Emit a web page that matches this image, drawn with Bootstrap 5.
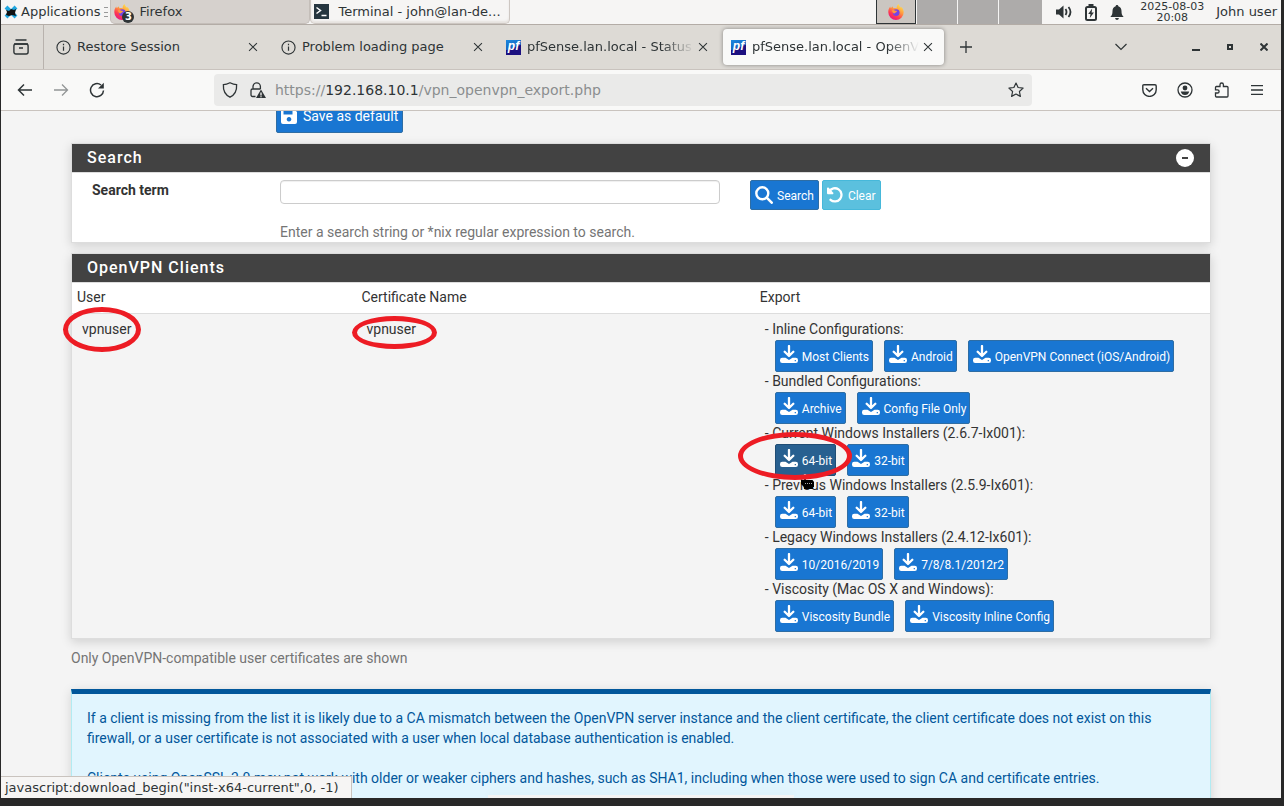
<!DOCTYPE html>
<html lang="en">
<head>
<meta charset="utf-8">
<meta name="viewport" content="width=device-width, initial-scale=1">
<title>pfSense.lan.local - OpenVPN: Client Export Utility</title>
<link href="https://cdn.jsdelivr.net/npm/bootstrap@5.3.0/dist/css/bootstrap.min.css" rel="stylesheet">
<style>
  :root { --ink: #2e3436; --chrome: #f6f5f4; --line: #c9c3be; }
  body { background: #282828; color: var(--ink); font: 13px/20px "DejaVu Sans", sans-serif; padding: 0 3px 8px 1px; }
  svg { display: block; flex: none; }
  .plain { border: 0; background: none; padding: 0; color: inherit; display: flex; align-items: center; justify-content: center; }

  /* desktop panel */
  .panel-bar { height: 25px; background: var(--chrome); border-bottom: 1px solid #b3aca6; }
  .panel-bar .plain { line-height: 20px; }
  .apps { margin: 0 4px 0 3px; gap: 3px; }
  .grip { width: 4px; height: 10px; margin-right: 2px; border-top: 1px solid #999; border-bottom: 1px solid #999; background: linear-gradient(#999, #999) 0 50% / 100% 1px no-repeat; }
  .task { width: 200px; height: 24px; justify-content: flex-start; padding-left: 3px; gap: 5px; border-radius: 0 0 5px 5px; }
  .task-on { background: #d6d1cd; border: 1px solid #c4beb9; border-top: 0; }
  .task-off { border: 1px solid #cdc7c2; border-top: 0; box-shadow: inset 0 -2px 2px #e6e2df; }
  .task-count { right: -4px; bottom: -3px; width: 12px; height: 12px; border-radius: 50%; background: var(--ink); color: #fff; font: bold 10px/12px "DejaVu Sans", sans-serif; }
  .pager { height: 24px; gap: 1px; }
  .pager > button { width: 40px; height: 24px; background: #adabaa; }
  .pager > button:first-child { background: #cbc6c1; border: 1px solid var(--ink); border-top: 0; }
  .pager > button:last-child { width: 43px; }
  .tray { margin: 0 16px 0 14px; gap: 12px; }
  .clock { font-size: 11px; line-height: 11px; }

  /* browser tabs */
  .tab-bar { height: 45px; background: #dddad5; border-bottom: 1px solid var(--line); }
  .plain.tab-list-btn { width: 43px; border-right: 1px solid #b8b2ad; padding-right: 2px; }
  .tab-item { width: 221px; height: 36px; padding: 0 8px; border-radius: 4px; }
  .tab-item.active { background: #f9f9f8; box-shadow: 0 0 4px #0006; }
  .tab-name { width: 168px; margin-left: 6px; overflow: hidden; white-space: nowrap; text-align: left; justify-content: flex-start; }
  .tab-fade { -webkit-mask-image: linear-gradient(to right, #000 135px, transparent 167px); mask-image: linear-gradient(to right, #000 135px, transparent 167px); }
  .favicon { width: 15px; height: 15px; background: linear-gradient(160deg, #1a8ae0, #1565c0 48%, #1c1080 52%); color: #fff; font: italic bold 12px/13px "Liberation Sans", sans-serif; text-align: center; }
  .tab-x { width: 16px; height: 16px; }
  .win-btn { width: 34px; }

  /* toolbar */
  .tool-bar { height: 41px; background: #f9f9f8; border-bottom: 1px solid var(--line); padding: 0 6px; }
  .tool-btn { width: 36px; height: 32px; }
  .url-box { margin: 0 99px; height: 32px; background: #eaeae9; border-radius: 4px; padding: 0 8px; }
  .url-text { font-size: 14px; color: #8b8e8f; margin-left: 9px; }
  .url-text b { font-weight: 400; color: var(--ink); }

  /* web page */
  .page { background: #f4f4f4; color: #333; font: 14px/20px Roboto, sans-serif; }
  .page .btn { --bs-btn-font-size: 12px; --bs-btn-border-radius: 2px; --bs-btn-color: #fff; --bs-btn-bg: #1976d2; --bs-btn-border-color: #2e6da4;
    --bs-btn-hover-bg: #286090; --bs-btn-hover-border-color: #204d74; --bs-btn-hover-color: #fff; --bs-btn-active-color: #fff; --bs-btn-active-bg: #286090; --bs-btn-active-border-color: #204d74;
    display: inline-flex; align-items: center; gap: 4px; height: 30px; line-height: 20px; padding: 2px 4px 0; }
  .page .btn svg { margin-top: -2px; }
  .page .btn-clear { --bs-btn-bg: #5bc0de; --bs-btn-border-color: #46b8da; gap: 5px; margin-left: 3px; }
  .page .btn-save { --bs-btn-font-size: 14px; height: 32px; gap: 6px; margin: -10px 0 10px 205px; padding: 0 4px 2px; }
  .page .btn-save svg { margin-top: 0; }
  .box { border: 1px solid #ddd; box-shadow: 0 3px 10px #00000026; margin-bottom: 10px; background: #fff; }
  .box-head { background: #424242; color: #fff; border-bottom: 1px solid #ddd; padding: 0 16px 0 15px; height: 29px; font-size: 16px; line-height: 28px; font-weight: 500; letter-spacing: 1px; margin: 0; }
  .box-form { padding: 7px 20px 0; }
  .box-form .row { --bs-gutter-x: 30px; }
  .box-form input { height: 24px; padding: 2px 6px; border: 1px solid #ccc; border-radius: 4px; font-size: 14px; box-shadow: inset 0 1px 1px #0001; }
  .box-form .help-line { margin-top: 18px; color: #757575; }
  .clients { --bs-table-bg: transparent; --bs-table-color: #333; color: #333; table-layout: fixed; }
  .clients th { font-weight: 400; padding: 4px 5px 6px; border-bottom: 1px solid #ddd; }
  .clients td { padding: 6px 10px; border: 0; background: #f4f4f4; line-height: 18px; }
  .export-name { padding-bottom: 2px; }
  .export-row { gap: 11px; padding-left: 10px; }
  .page .export-row .btn { height: 32px; padding-right: 3px; }
  .page .export-row .btn svg { margin-top: -6px; }
  .note { color: #757575; margin-top: -1px; }
  .info-box { margin-top: 21px; min-height: 160px; border: 1px solid #b2ebf2; border-top: 5px solid #01579b; background: #e1f5fe; color: #01579b; padding: 14px 15px; box-shadow: 0 2px 10px #0002; }
  .info-box p { margin-bottom: 20px; }
  .popup-edge { width: 306px; height: 3px; background: #f4f4f4; box-shadow: 0 -2px 8px #0000000d; }
  .status { background: var(--chrome); border: 1px solid var(--line); border-width: 1px 1px 0 0; padding: 0 12px 0 4px; font: 13px/21px "DejaVu Sans", sans-serif; color: var(--ink); }

  /* hand-drawn rings */
  .ring { position: absolute; border: 5px solid #ed1c24; border-radius: 50%; pointer-events: none; z-index: 3; }
  .ring-user { left: -19px; top: -14px; width: 78px; height: 45px; }
  .ring-cert { left: -15px; top: -5px; width: 85px; height: 33px; }
  .ring-bit { left: -37px; top: -12px; width: 114px; height: 48px; }
  .hand { position: absolute; left: 25px; top: 30px; z-index: 2; }
</style>
</head>
<body class="vh-100 d-flex flex-column overflow-hidden">
<svg width="0" height="0" class="position-absolute" aria-hidden="true">
  <defs>
    <linearGradient id="fox" x1="0.9" y1="0" x2="0.3" y2="1"><stop offset="0" stop-color="#fff44f"/><stop offset=".45" stop-color="#ff9640"/><stop offset=".75" stop-color="#ff3750"/><stop offset="1" stop-color="#e31587"/></linearGradient>
  </defs>
  <symbol id="i-firefox" viewBox="0 0 16 16"><path fill="url(#fox)" d="M8 16A7.7 7.7 0 0 1 .3 8.3C.3 6 1 4.200 2.300 2.600l.4 1.700C3.500 3.300 4 2.900 4.800 2.500l.6 1.700c1.300-.4 2.500-.1 3.300.1C8.400 2.800 9 1.200 10.600 0c.2 1.600 1.200 2.500 2.400 3.700l.5-.8C15 4.700 15.700 6.400 15.700 8.300A7.700 7.700 0 0 1 8 16z"/><circle cx="8.200" cy="8.600" r="3.400" fill="#7542e5"/><path d="M4 6.500c1.300-.8 2.200-.4 3.400.3 1.500 0 1.800.3 1.300 1.100-1 .4-1.400.8-2.200 1.500C5 9.500 4.200 8 4 6.500z" fill="#ff9640"/></symbol>
  <symbol id="i-info" viewBox="0 0 16 16"><circle cx="8" cy="8" r="7" fill="none" stroke="currentColor" stroke-width="1.200"/><path d="M8 7v4.500M8 4v1.500" stroke="currentColor" stroke-width="1.300"/></symbol>
  <symbol id="i-x" viewBox="0 0 16 16"><path d="M3.500 3.500l9 9M12.500 3.500l-9 9" stroke="currentColor" stroke-width="1.200"/></symbol>
  <symbol id="i-dl" viewBox="0 0 18 18"><path d="M9 1v9.500M4.700 6.800 9 11l4.300-4.200" fill="none" stroke="#fff" stroke-width="2.300" stroke-linecap="round" stroke-linejoin="round"/><path fill="#fff" fill-rule="evenodd" d="M2.200 12.800h3.300L9 15l3.500-2.200h3.300A2.200 2.200 0 0 1 18 15v.8a2.200 2.200 0 0 1-2.200 2.200H2.200A2.200 2.200 0 0 1 0 15.800V15a2.200 2.200 0 0 1 2.200-2.200zM14.700 15v1.200h1.200V15z"/></symbol>
</svg>

<header class="panel-bar d-flex align-items-center flex-shrink-0">
  <button class="plain apps"><svg width="14" height="14" viewBox="0 0 14 14"><path d="M2 2l10 10M12 2 2 12" stroke="#1fa7e0" stroke-width="4"/><path d="M2 5l3 1 2-2 3 1 2-1-1 4 1 3-4-1-3 1-3-1 1-3z" fill="#111"/></svg><span>Applications</span></button>
  <span class="grip"></span>
  <button class="plain task task-on"><span class="position-relative"><svg width="16" height="16"><use href="#i-firefox"/></svg><span class="task-count position-absolute">3</span></span><span class="ps-1">Firefox</span></button>
  <button class="plain task task-off"><svg width="15" height="15" viewBox="0 0 15 15"><path fill="#263640" d="M0 0h15v15H0z"/><path d="M2.500 3.500l4 3-4 3M7.500 11.500h5" fill="none" stroke="#fff" stroke-width="1.500"/></svg><span class="ps-1">Terminal - john@lan-de...</span></button>
  <div class="pager d-flex ms-auto">
    <button class="plain" aria-label="Workspace 1"><svg width="16" height="16"><use href="#i-firefox"/></svg></button>
    <button class="plain" aria-label="Workspace 2"></button><button class="plain" aria-label="Workspace 3"></button><button class="plain" aria-label="Workspace 4"></button>
  </div>
  <div class="tray d-flex align-items-center">
    <button class="plain" aria-label="Volume"><svg width="16" height="16" viewBox="0 0 16 16"><path fill="currentColor" d="M0 5.500h3l4.500-4v13l-4.500-4H0z"/><path d="M9.500 5q2 3 0 6M12.500 3q4 5 0 10" fill="none" stroke="currentColor" stroke-width="1.800"/></svg></button>
    <button class="plain" aria-label="Battery"><svg width="14" height="17" viewBox="0 0 14 17"><rect x="2" y="3" width="10" height="13" rx="1.500" fill="none" stroke="currentColor" stroke-width="2"/><path fill="currentColor" d="M4.500 0h5v3h-5zM8.200 4.500 4.200 10h2.300l-.7 4L9.900 8.500H7.600z"/></svg></button>
    <button class="plain" aria-label="Notifications"><svg width="14" height="15" viewBox="0 0 14 15"><path fill="currentColor" d="M7 0c1 0 1.300.6 1.300 1.300C10.500 2 11.500 4 11.500 6c0 3 .5 4.500 2.200 6H.3c1.700-1.500 2.200-3 2.200-6 0-2 1-4 3.200-4.700C5.700.6 6 0 7 0zM5 13h4q-.5 2-2 2t-2-2z"/></svg></button>
  </div>
  <time class="clock text-center" datetime="2025-08-03T20:08">2025-08-03<br>20:08</time>
  <button class="plain ms-2 ps-1 pe-1">John user</button>
</header>

<nav class="tab-bar d-flex align-items-stretch flex-shrink-0" aria-label="Tabs">
  <button class="plain tab-list-btn" aria-label="Recent tabs"><svg width="16" height="16" viewBox="0 0 16 16" fill="none" stroke="currentColor" stroke-width="1.400"><path d="M2.500 1h11M1 5h14M6 9h4"/><rect x=".9" y="5" width="14.200" height="10" rx="2"/></svg></button>
  <div class="d-flex align-items-center gap-1 ms-1">
    <div class="tab-item d-flex align-items-center"><svg width="15" height="15"><use href="#i-info"/></svg><button class="plain tab-name">Restore Session</button><button class="plain tab-x" aria-label="Close tab"><svg width="14" height="14"><use href="#i-x"/></svg></button></div>
    <div class="tab-item d-flex align-items-center"><svg width="15" height="15"><use href="#i-info"/></svg><button class="plain tab-name">Problem loading page</button><button class="plain tab-x" aria-label="Close tab"><svg width="14" height="14"><use href="#i-x"/></svg></button></div>
    <div class="tab-item d-flex align-items-center"><span class="favicon">pf</span><button class="plain tab-name tab-fade">pfSense.lan.local - Status</button><button class="plain tab-x" aria-label="Close tab"><svg width="14" height="14"><use href="#i-x"/></svg></button></div>
    <div class="tab-item active d-flex align-items-center"><span class="favicon">pf</span><button class="plain tab-name tab-fade">pfSense.lan.local - OpenV</button><button class="plain tab-x" aria-label="Close tab"><svg width="14" height="14"><use href="#i-x"/></svg></button></div>
  </div>
  <button class="plain ms-3" aria-label="New tab"><svg width="12" height="12" viewBox="0 0 12 12"><path d="M6 0v12M0 6h12" stroke="currentColor" stroke-width="1.300"/></svg></button>
  <button class="plain ms-auto me-5" aria-label="List all tabs"><svg width="12" height="8" viewBox="0 0 12 8"><path d="M.5 1 6 6.500 11.500 1" fill="none" stroke="currentColor" stroke-width="1.200"/></svg></button>
  <div class="d-flex ps-1">
    <button class="plain win-btn" aria-label="Minimize"><svg width="8" height="8" viewBox="0 0 8 8"><path fill="currentColor" d="M0 6h8v2H0z"/></svg></button>
    <button class="plain win-btn" aria-label="Restore"><svg width="6" height="6" viewBox="0 0 6 6"><path d="M1 1h4v4H1z" fill="none" stroke="currentColor" stroke-width="2"/></svg></button>
    <button class="plain win-btn" aria-label="Close"><svg width="8" height="8" viewBox="0 0 8 8"><path d="M.5.500l7 7M7.500.5l-7 7" stroke="currentColor" stroke-width="2"/></svg></button>
  </div>
</nav>

<div class="tool-bar d-flex align-items-center flex-shrink-0">
  <button class="plain tool-btn" aria-label="Back"><svg width="16" height="14" viewBox="0 0 16 14"><path d="M15 7H1.500M7 1.500 1.500 7 7 12.500" fill="none" stroke="currentColor" stroke-width="1.500"/></svg></button>
  <button class="plain tool-btn opacity-50" aria-label="Forward"><svg width="16" height="14" viewBox="0 0 16 14"><path d="M1 7h13.500M9 1.500 14.500 7 9 12.500" fill="none" stroke="currentColor" stroke-width="1.300"/></svg></button>
  <button class="plain tool-btn" aria-label="Reload"><svg width="16" height="16" viewBox="0 0 16 16"><path d="M14.500 8.500A6.500 6.500 0 1 1 12 3" fill="none" stroke="currentColor" stroke-width="1.500"/><path fill="currentColor" d="M14.800.8v5.800H9z"/></svg></button>
  <div class="url-box flex-grow-1 d-flex align-items-center">
    <button class="plain" aria-label="Tracking protection"><svg width="16" height="16" viewBox="0 0 16 16"><path d="M8 .8q3.500 1.900 6.600 1.900Q15.200 11.500 8 15.200.8 11.500 1.400 2.700 4.500 2.700 8 .8z" fill="none" stroke="currentColor" stroke-width="1.300"/></svg></button>
    <button class="plain ms-2 ps-1" aria-label="Connection not secure"><svg width="16" height="16" viewBox="0 0 16 16"><path d="M3 7V4.500a3.700 3.700 0 0 1 7.400 0V7M5.500 14.500H2.500a1.500 1.500 0 0 1-1.500-1.500V8.500A1.500 1.500 0 0 1 2.500 7h8" fill="none" stroke="currentColor" stroke-width="1.300"/><path fill="currentColor" fill-rule="evenodd" d="M11 7.500 16 16H6zM10.300 10.500v3h1.400v-3zM10.300 14.200v1h1.400v-1z"/></svg></button>
    <span class="url-text flex-grow-1">https://<b>192.168.10.1</b>/vpn_openvpn_export.php</span>
    <button class="plain" aria-label="Bookmark"><svg width="16" height="16" viewBox="0 0 16 16"><path d="M8 1l2.100 4.500 5 .6-3.700 3.400 1 4.900L8 12l-4.400 2.400 1-4.900L.9 6.100l5-.6z" fill="none" stroke="currentColor" stroke-width="1.200" stroke-linejoin="round"/></svg></button>
  </div>
  <button class="plain tool-btn" aria-label="Pocket"><svg width="15" height="13" viewBox="0 0 15 13" fill="none" stroke="currentColor" stroke-width="1.400"><path d="M2 .8h11q1.200 0 1.200 1.200v3.700a6.700 6.700 0 0 1-13.400 0V2Q.8.800 2 .800z"/><path d="M4 4.300l3.500 3.300L11 4.300"/></svg></button>
  <button class="plain tool-btn" aria-label="Account"><svg width="16" height="16" viewBox="0 0 16 16"><circle cx="8" cy="8" r="7" fill="none" stroke="currentColor" stroke-width="1.300"/><circle cx="8" cy="6" r="2.400" fill="currentColor"/><path d="M3.800 9.500h8.400q-.8 3.500-4.200 3.500t-4.200-3.500z" fill="currentColor"/></svg></button>
  <button class="plain tool-btn" aria-label="Extensions"><svg width="15" height="16" viewBox="0 0 15 16"><path d="M2 4.500h4V2.700a1.700 1.700 0 0 1 3.400 0v1.800H13q1 0 1 1V14q0 1-1 1H2.500q-1 0-1-1v-3h2a1.500 1.500 0 0 0 0-3.200h-2V5.500q0-1 1-1z" fill="none" stroke="currentColor" stroke-width="1.300"/></svg></button>
  <button class="plain tool-btn" aria-label="Menu"><svg width="12" height="10" viewBox="0 0 12 10"><path d="M0 .7h12M0 5h12M0 9.300h12" stroke="currentColor" stroke-width="1.300"/></svg></button>
</div>

<main class="page flex-grow-1 position-relative overflow-hidden">
  <div class="container p-0">
    <button class="btn btn-primary btn-save"><svg width="16" height="16" viewBox="0 0 16 16"><path fill="#fff" fill-rule="evenodd" d="M2 0h10l4 4v10a2 2 0 0 1-2 2H2a2 2 0 0 1-2-2V2a2 2 0 0 1 2-2zM2.500 2.500v4h9v-4zM8 9a2.300 2.300 0 1 0 .01 0z"/></svg>Save as default</button>

    <section class="box">
      <h2 class="box-head d-flex align-items-center">Search
        <button class="plain ms-auto" aria-label="Collapse"><svg width="18" height="18" viewBox="0 0 18 18"><circle cx="9" cy="9" r="9" fill="#fff"/><path d="M6 9h6" stroke="#424242" stroke-width="2"/></svg></button></h2>
      <form class="box-form">
        <div class="row">
          <label for="term" class="col-2 fw-bold">Search term</label>
          <div class="col-5"><input id="term" type="text" class="w-100 d-block"><div class="help-line text-nowrap">Enter a search string or *nix regular expression to search.</div></div>
          <div class="col-5 d-flex align-items-start">
            <button type="button" class="btn btn-primary"><svg width="18" height="18" viewBox="0 0 18 18"><circle cx="7.300" cy="7.300" r="6" fill="none" stroke="#fff" stroke-width="2.400"/><path d="M11.700 11.700l5 5" stroke="#fff" stroke-width="2.600" stroke-linecap="round"/></svg>Search</button>
            <button type="button" class="btn btn-primary btn-clear"><svg width="16" height="16" viewBox="0 0 16 16"><path d="M2.200 4.500A6.600 6.600 0 1 1 3.500 12.800" fill="none" stroke="#fff" stroke-width="2.300" stroke-linecap="round"/><path fill="#fff" d="M0 .8l1.500-.3L6.500 6 6 7.200H.8L0 6.500z"/></svg>Clear</button>
          </div>
        </div>
      </form>
    </section>

    <section class="box">
      <h2 class="box-head">OpenVPN Clients</h2>
      <table class="table clients mb-0">
        <colgroup><col style="width:25%"><col style="width:35%"><col style="width:40%"></colgroup>
        <thead><tr><th scope="col">User</th><th scope="col">Certificate Name</th><th scope="col">Export</th></tr></thead>
        <tbody><tr>
          <td><span class="position-relative">vpnuser<span class="ring ring-user"></span></span></td>
          <td><span class="position-relative">vpnuser<span class="ring ring-cert"></span></span></td>
          <td>
            <div class="export-name">- Inline Configurations:</div>
            <div class="export-row d-flex"><button class="btn btn-primary"><svg width="18" height="18"><use href="#i-dl"/></svg>Most Clients</button><button class="btn btn-primary"><svg width="18" height="18"><use href="#i-dl"/></svg>Android</button><button class="btn btn-primary"><svg width="18" height="18"><use href="#i-dl"/></svg>OpenVPN Connect (iOS/Android)</button></div>
            <div class="export-name">- Bundled Configurations:</div>
            <div class="export-row d-flex"><button class="btn btn-primary"><svg width="18" height="18"><use href="#i-dl"/></svg>Archive</button><button class="btn btn-primary"><svg width="18" height="18"><use href="#i-dl"/></svg>Config File Only</button></div>
            <div class="export-name">- Current Windows Installers (2.6.7-Ix001):</div>
            <div class="export-row d-flex"><span class="position-relative d-flex"><button class="btn btn-primary active"><svg width="18" height="18"><use href="#i-dl"/></svg>64-bit</button><svg class="hand" width="16" height="16" viewBox="0 0 16 16"><path d="M3.500 8V2q0-1.500 1.500-1.500T6.500 2v6z" fill="#222" stroke="#fff"/><path d="M1 6h11.500l1.500 2v5h-1v2H4v-2L1 10z" fill="#000"/><path d="M5 9.500h7" stroke="#aaa" stroke-dasharray="1 1"/></svg><span class="ring ring-bit"></span></span><button class="btn btn-primary"><svg width="18" height="18"><use href="#i-dl"/></svg>32-bit</button></div>
            <div class="export-name">- Previous Windows Installers (2.5.9-Ix601):</div>
            <div class="export-row d-flex"><button class="btn btn-primary"><svg width="18" height="18"><use href="#i-dl"/></svg>64-bit</button><button class="btn btn-primary"><svg width="18" height="18"><use href="#i-dl"/></svg>32-bit</button></div>
            <div class="export-name">- Legacy Windows Installers (2.4.12-Ix601):</div>
            <div class="export-row d-flex"><button class="btn btn-primary"><svg width="18" height="18"><use href="#i-dl"/></svg>10/2016/2019</button><button class="btn btn-primary"><svg width="18" height="18"><use href="#i-dl"/></svg>7/8/8.1/2012r2</button></div>
            <div class="export-name">- Viscosity (Mac OS X and Windows):</div>
            <div class="export-row d-flex"><button class="btn btn-primary"><svg width="18" height="18"><use href="#i-dl"/></svg>Viscosity Bundle</button><button class="btn btn-primary"><svg width="18" height="18"><use href="#i-dl"/></svg>Viscosity Inline Config</button></div>
          </td>
        </tr></tbody>
      </table>
    </section>

    <div class="note">Only OpenVPN-compatible user certificates are shown</div>
    <div class="info-box">
      <p>If a client is missing from the list it is likely due to a CA mismatch between the OpenVPN server instance and the client certificate, the client certificate does not exist on this firewall, or a user certificate is not associated with a user when local database authentication is enabled.</p>
      <p>Clients using OpenSSL 3.0 may not work with older or weaker ciphers and hashes, such as SHA1, including when those were used to sign CA and certificate entries.</p>
    </div>
  </div>
  <div class="popup-edge position-absolute bottom-0 start-50 translate-middle-x"></div>
  <div class="status position-absolute bottom-0 start-0">javascript:download_begin("inst-x64-current",0, -1)</div>
</main>
<script src="https://cdn.jsdelivr.net/npm/bootstrap@5.3.0/dist/js/bootstrap.bundle.min.js"></script>
</body>
</html>
